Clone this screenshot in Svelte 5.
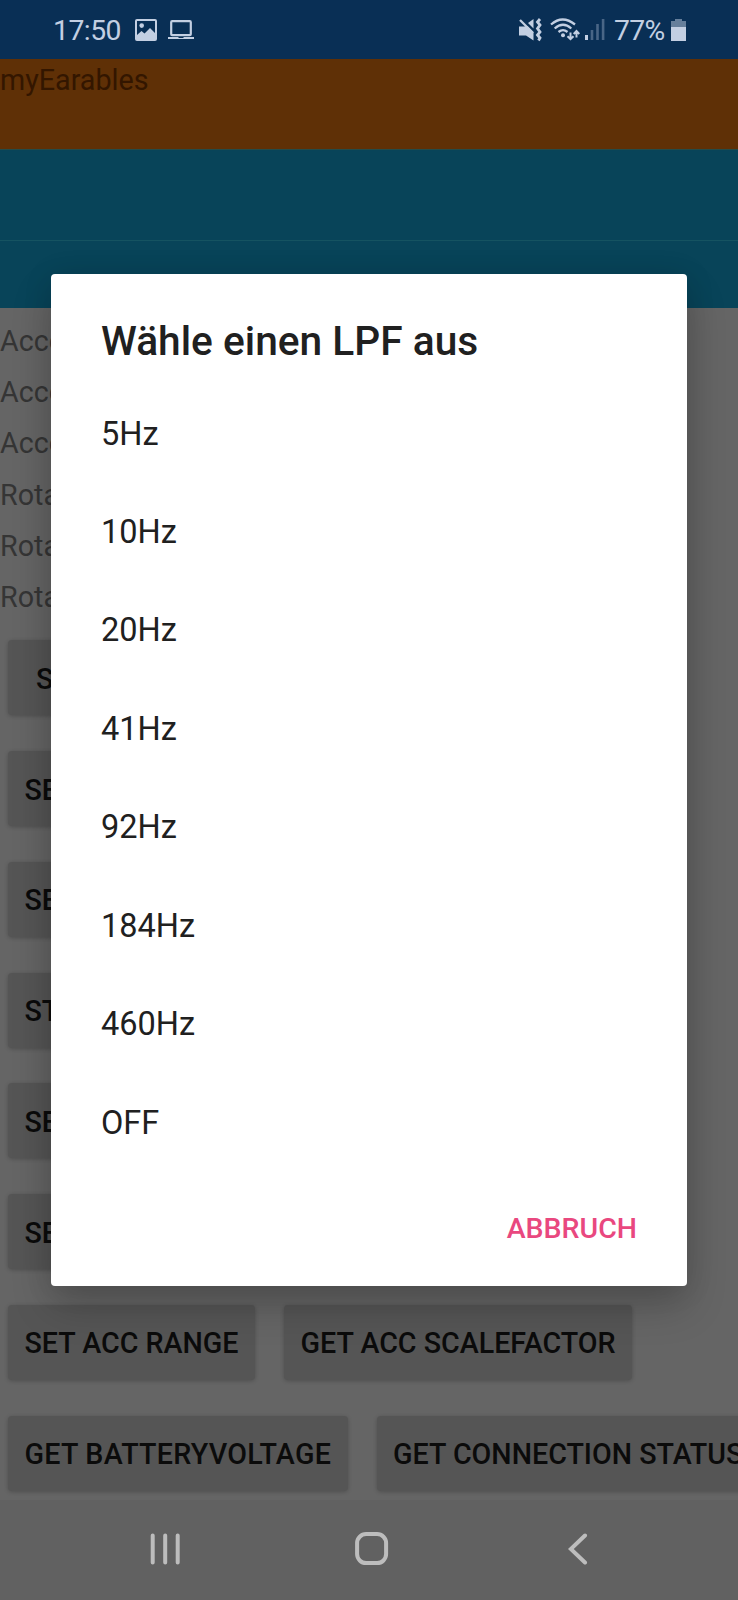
<script>
  const readings = ['Acce', 'Acce', 'Acce', 'Rota', 'Rota', 'Rota'];
  const rows = [
    [{ text: 'S', kind: 'inset' }],
    [{ text: 'SE', kind: 'wide' }],
    [{ text: 'SE', kind: 'wide' }],
    [{ text: 'ST', kind: 'wide' }],
    [{ text: 'SE', kind: 'wide' }],
    [{ text: 'SE', kind: 'wide' }],
    [{ text: 'SET ACC RANGE', kind: 'range' }, { text: 'GET ACC SCALEFACTOR', kind: 'scale' }],
    [{ text: 'GET BATTERYVOLTAGE', kind: 'voltage' }, { text: 'GET CONNECTION STATUS', kind: 'connection' }]
  ];
  const options = ['5Hz', '10Hz', '20Hz', '41Hz', '92Hz', '184Hz', '460Hz', 'OFF'];
</script>

<div class="screen">
  <header class="status">
    <span class="clock">17:50</span>
    <svg class="photo" width="22" height="22" viewBox="0 0 22 22">
      <path fill-rule="evenodd" d="M2 0H20Q22 0 22 2V20Q22 22 20 22H2Q0 22 0 20V2Q0 0 2 0ZM2 2V16L6.5 12L9.5 14.5L15 9L20 14V2Z" />
      <circle cx="6.7" cy="6.6" r="2.3" />
    </svg>
    <svg class="laptop" width="26" height="20" viewBox="0 0 26 20">
      <rect x="3.2" y="1.2" width="19.6" height="14" rx="1" fill="none" stroke="currentColor" stroke-width="2.2" />
      <path d="M0 17H10L11 18H15L16 17H26V19H0Z" />
    </svg>
    <span class="spacer"></span>
    <svg class="mute" width="24" height="24" viewBox="0 0 24 24">
      <path d="M1 8.5H6L9.5 8L15.5 14V22.5L8 17.5H1Z" />
      <path d="M10 5L15.5 1V10.5Z" />
      <path d="M2 2L15 15" fill="none" stroke="currentColor" stroke-width="2.3" />
      <path d="M22 1L19.5 4L22 7L19.5 10.5L22 14L19.5 17L22 20L20.5 22.5" fill="none" stroke="currentColor" stroke-width="2.8" />
    </svg>
    <svg class="wifi" width="30" height="24" viewBox="0 0 30 24">
      <g fill="none" stroke="currentColor" stroke-width="2.3">
        <path d="M1 6.5Q12.5-3.5 25 6.5" />
        <path d="M4.7 10.5Q13 3 21.3 10.5" />
        <path d="M8.5 14Q13 10.3 17.5 14" />
        <path d="M20.5 14.5V21M17.5 18.2L20.5 21.2L23.5 18.2M26.5 19.5V13.5M23.7 16L26.5 13L29.3 16" stroke-width="2" />
      </g>
      <circle cx="13" cy="17.3" r="2" />
    </svg>
    <svg class="signal" width="20" height="22" viewBox="0 0 20 22">
      <path d="M0 17H3V22H0Z" />
      <path opacity=".35" d="M5.7 12H8.3V22H5.7ZM11.2 6H13.8V22H11.2ZM16.8 1H19.4V22H16.8Z" />
    </svg>
    <span class="percent">77%</span>
    <svg class="battery" width="15" height="22" viewBox="0 0 15 22">
      <path opacity=".5" d="M4 0H11V2H15V8H0V2H4Z" />
      <path d="M0 8H15V22H0Z" />
    </svg>
  </header>

  <div class="brand">myEarables</div>
  <div class="band upper"></div>
  <div class="band lower"></div>

  <main>
    <div class="readings">
      {#each readings as reading}
        <div class="reading">{reading}</div>
      {/each}
    </div>
    <div class="buttons">
      {#each rows as row}
        <div class="row">
          {#each row as button}
            <button class={button.kind}>{button.text}</button>
          {/each}
        </div>
      {/each}
    </div>
  </main>

  <nav>
    <svg width="30" height="34" viewBox="0 0 30 34"><path d="M2.7 3.5V30.5M15.2 3.5V30.5M27.7 3.5V30.5" /></svg>
    <svg class="home" width="34" height="34" viewBox="0 0 34 34"><rect x="2.1" y="2.1" width="29" height="29" rx="9" /></svg>
    <svg width="20" height="34" viewBox="0 0 20 34"><path d="M17 3.5L2.8 17L17 30.5" /></svg>
  </nav>

  <section class="dialog" role="dialog" aria-modal="true">
    <h1>Wähle einen LPF aus</h1>
    <ul>
      {#each options as option}
        <li>{option}</li>
      {/each}
    </ul>
    <div class="actions"><button class="cancel">ABBRUCH</button></div>
  </section>
</div>

<style>
  .screen {
    position: relative;
    width: 738px;
    height: 1600px;
    overflow: hidden;
    display: flex;
    flex-direction: column;
    background: #656565;
    font-family: Roboto, sans-serif;
    font-size: 28.7px;
  }
  .status {
    box-sizing: border-box;
    height: 59px;
    flex: none;
    display: flex;
    align-items: center;
    padding: 0 52px 0 53px;
    background: #092f55;
    color: #c3cfe2;
  }
  .status svg { fill: currentColor; flex: none; }
  .clock { width: 68px; padding-top: 1px; font-size: 28.3px; letter-spacing: -0.5px; }
  .photo { margin-left: 14px; }
  .laptop { margin-left: 11px; }
  .spacer { flex: 1; }
  .wifi { margin-left: 8px; }
  .signal { margin-left: 5px; margin-top: -1px; }
  .percent { margin-left: 9px; width: 51px; padding-top: 1px; font-size: 28.3px; letter-spacing: -0.6px; }
  .battery { margin-left: 6px; }
  .brand {
    box-sizing: border-box;
    height: 90px;
    flex: none;
    padding-top: 5px;
    line-height: 33.6px;
    background: #5f3006;
    color: #331600;
  }
  .band { box-sizing: border-box; flex: none; background: #084459; }
  .upper { height: 92px; border-top: 1px solid #244b48; border-bottom: 1px solid #155361; }
  .lower { height: 66.5px; }
  main { height: 1192px; flex: none; overflow: hidden; }
  .readings { padding-top: 8.3px; color: #353535; }
  .reading { height: 51.3px; line-height: 51.3px; }
  .buttons { display: flex; flex-direction: column; gap: 35.6px; padding: 16.6px 0 0 8px; }
  .row { display: flex; gap: 29px; }
  .row button {
    box-sizing: border-box;
    flex: none;
    height: 75.2px;
    padding: 2px 0 0 16.5px;
    border: 0;
    border-radius: 4px;
    background: #555;
    box-shadow: 0 1px 4px rgba(0, 0, 0, 0.22);
    color: #0b0b0b;
    font: 500 28.65px Roboto, sans-serif;
    text-align: left;
    white-space: nowrap;
  }
  .row .inset { width: 180px; padding-left: 28px; }
  .row .wide { width: 240px; }
  .row .range { width: 247px; }
  .row .scale { width: 348px; }
  .row .voltage { width: 339.5px; letter-spacing: 0.24px; }
  .row .connection { width: 382px; }
  nav {
    flex: 1;
    display: flex;
    align-items: flex-start;
    justify-content: space-between;
    padding: 32px 150px 0 150px;
    background: #616161;
  }
  nav svg { fill: none; stroke: #bdbdbd; stroke-width: 4; stroke-linecap: round; }
  nav .home { margin-right: 5px; }
  .dialog {
    position: absolute;
    left: 51px;
    top: 274px;
    box-sizing: border-box;
    width: 636px;
    height: 1011.5px;
    border-radius: 4px;
    background: #fff;
    box-shadow: 0 20px 40px rgba(0, 0, 0, 0.2), 0 2px 30px rgba(0, 0, 0, 0.1);
    color: #202020;
  }
  h1 {
    margin: 0;
    padding: 43px 50px 0;
    height: 67.5px;
    line-height: 48px;
    font-size: 40.7px;
    font-weight: 500;
  }
  ul { margin: 0; padding: 0 50px; list-style: none; font-size: 32.5px; }
  li { height: 98.45px; line-height: 98.45px; }
  .actions { display: flex; justify-content: flex-end; padding: 31.9px 50px 0; }
  .cancel {
    height: 50px;
    padding: 0;
    border: 0;
    background: transparent;
    color: #e9487f;
    font: 500 28.5px Roboto, sans-serif;
  }
</style>
